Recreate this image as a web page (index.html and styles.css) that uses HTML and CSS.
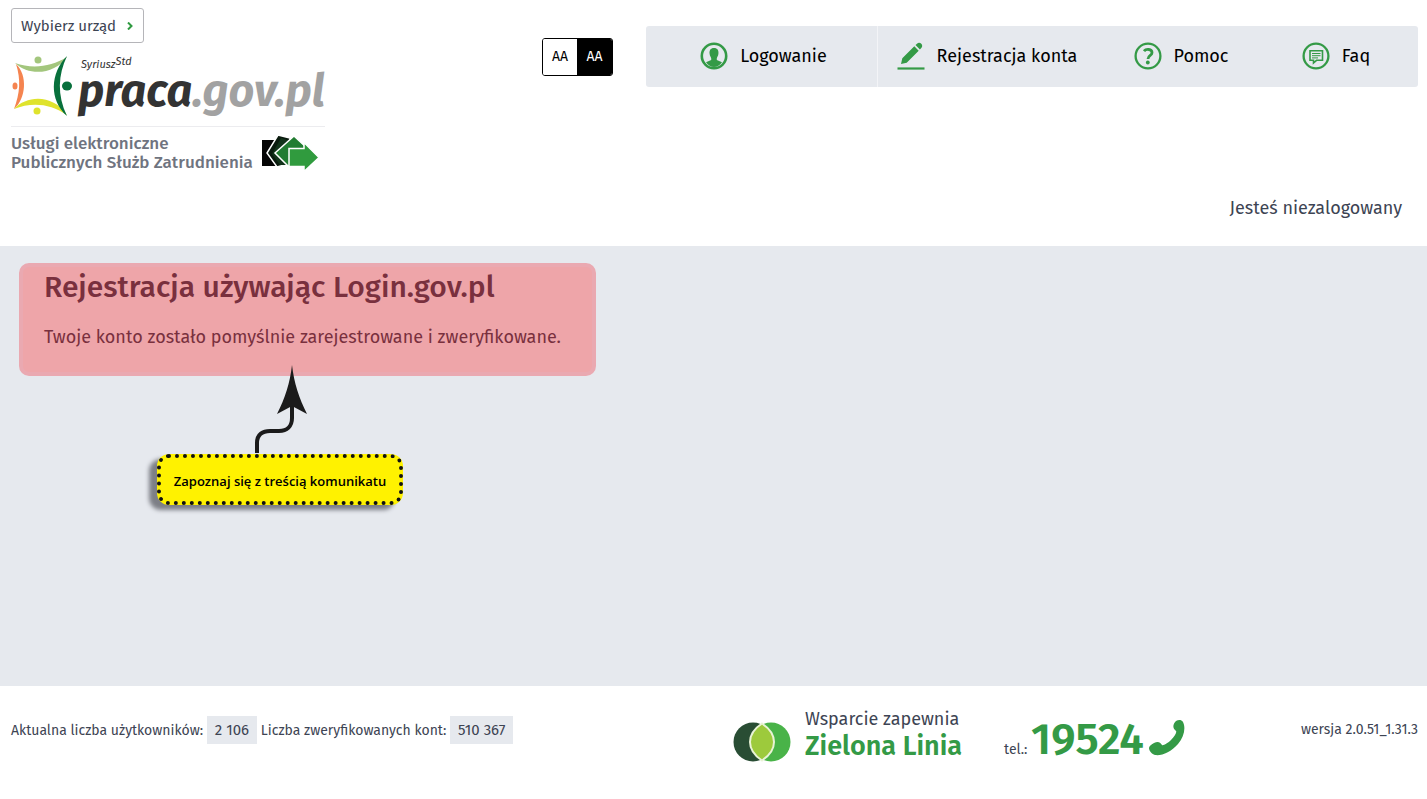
FILE: index.html
```html
<!DOCTYPE html>
<html lang="pl">
<head>
    <meta charset="utf-8">
    <meta name="viewport" content="width=device-width, initial-scale=1">
    <title>praca.gov.pl</title>
    <link rel="stylesheet" href="styles.css">
</head>
<body>
    <header class="header">
        <div class="brand">
            <button type="button" class="office-btn">Wybierz urząd
                <svg width="6" height="8" viewBox="0 0 6 8"><path d="M1 0.5L4.5 4L1 7.5" fill="none" stroke="#2f9a41" stroke-width="2"/></svg>
            </button>
            <a href="#" class="logo">
                <svg class="logo-mark" width="64" height="64" viewBox="0 0 64 64">
                    <path d="M4 8C21 14 40 12 56 2C44 19 19 22 4 8Z" fill="#a3c67d"/>
                    <path d="M5 9C17 20 15 44 3 54C9 38 10 25 5 9Z" fill="#f58450"/>
                    <path d="M3 54C16 40 42 39 56 60C39 48 20 47 3 54Z" fill="#dfe32d"/>
                    <path d="M56 1C47 20 46 40 56 61C38 45 39 18 56 1Z" fill="#08703c"/>
                    <circle cx="27" cy="5" r="3.5" fill="#a3c67d"/>
                    <ellipse cx="4" cy="31" rx="2.5" ry="3.5" fill="#f58450"/>
                    <circle cx="26" cy="56" r="3.5" fill="#dfe32d"/>
                    <ellipse cx="56" cy="31" rx="5" ry="4.5" fill="#08703c"/>
                </svg>
                <span class="logo-text">
                    <span class="logo-small">Syriusz<sup>Std</sup></span>
                    <span class="logo-name">praca<span>.gov.pl</span></span>
                </span>
            </a>
            <div class="tagline">
                <p>Usługi elektroniczne<br>Publicznych Służb Zatrudnienia</p>
                <svg width="57" height="38" viewBox="0 0 57 38">
                    <path d="M0 6H14V32H0Z" fill="#050505"/>
                    <path d="M16 1L28 4L26 30L15 33L5 19Z" fill="#0a1a0e" stroke="#fff" stroke-width="1.5"/>
                    <path d="M19 4L28 7L26 31L18 31L10 20Z" fill="#12331a"/>
                    <path d="M32 2L45 14V32H26L13 19Z" fill="#217c31" stroke="#fff" stroke-width="1.5"/>
                    <path d="M27 14.5H42V8.5L57 23.5L42 37.5V32.5H27Z" fill="#309b3e" stroke="#fff" stroke-width="1.5"/>
                </svg>
            </div>
        </div>
        <div class="tools">
            <div class="top-row">
                <div class="contrast">
                    <button type="button">AA</button>
                    <button type="button" class="dark">AA</button>
                </div>
                <nav class="menu">
                    <a href="#">
                        <svg width="28" height="28" viewBox="0 0 28 28">
                            <circle cx="14" cy="14" r="12.2" fill="none" stroke="#349a46" stroke-width="2.6"/>
                            <path d="M14 6C17.5 6 18.8 8.3 18.4 11.8C18.2 14 17.2 15 16.8 16.3V18L22 20.3C20 23.5 17 25 14 25S8 23.5 6 20.3L11.2 18V16.3C10.8 15 9.8 14 9.6 11.8C9.2 8.3 10.5 6 14 6Z" fill="#349a46"/>
                        </svg>
                        Logowanie
                    </a>
                    <a href="#" class="register">
                        <svg width="28" height="28" viewBox="0 0 28 28">
                            <path d="M4 22L5.3 16.3L17.3 4.3L21.7 8.7L9.7 20.7ZM18.5 3.1L20 1.7C21.2 0.5 23 0.5 24.3 1.7C25.5 3 25.5 4.8 24.3 6L22.9 7.5Z" fill="#349a46"/>
                            <path d="M0.5 26.5H27.5" stroke="#349a46" stroke-width="2.2"/>
                        </svg>
                        Rejestracja konta
                    </a>
                    <a href="#">
                        <svg width="28" height="28" viewBox="0 0 28 28">
                            <circle cx="14" cy="14" r="12.4" fill="none" stroke="#349a46" stroke-width="2.3"/>
                            <path d="M10 9.2C12 6.7 18 6.7 18 10.7C18 13.5 14 13.2 14 17" fill="none" stroke="#349a46" stroke-width="2.8"/>
                            <circle cx="13.8" cy="20.5" r="1.9" fill="#349a46"/>
                        </svg>
                        Pomoc
                    </a>
                    <a href="#">
                        <svg width="28" height="28" viewBox="0 0 28 28">
                            <circle cx="14" cy="14" r="12.4" fill="none" stroke="#349a46" stroke-width="2.3"/>
                            <path d="M8 8.8H20.5V18.3H14.5L11.5 21V18.3H8Z" fill="none" stroke="#349a46" stroke-width="1.6"/>
                            <path d="M10 11.5H18.5M10 13.7H18.5M10 15.9H16" stroke="#349a46"/>
                        </svg>
                        Faq
                    </a>
                </nav>
            </div>
            <p class="login-status">Jesteś niezalogowany</p>
        </div>
    </header>

    <main class="content">
        <section class="message">
            <h1>Rejestracja używając Login.gov.pl</h1>
            <p>Twoje konto zostało pomyślnie zarejestrowane i zweryfikowane.</p>
        </section>
        <div class="callout">
            <svg class="callout-arrow" width="54" height="90" viewBox="0 0 54 90">
                <path d="M4 88V78C4 69 10 66 17 66H26C34 66 39 61 39 53V36" fill="none" stroke="#1b1b1b" stroke-width="4"/>
                <path d="M39 0C41 18 46 33 54 49L39 41L24 49C32 33 37 18 39 0Z" fill="#1b1b1b"/>
            </svg>
            Zapoznaj się z treścią komunikatu
        </div>
    </main>

    <footer class="footer">
        <p class="stats">
            Aktualna liczba użytkowników: <span>2 106</span>
            Liczba zweryfikowanych kont: <span>510 367</span>
        </p>
        <div class="support">
            <svg class="support-mark" width="58" height="40" viewBox="0 0 58 40">
                <circle cx="20" cy="20" r="19.5" fill="#294d34"/>
                <circle cx="38" cy="20" r="19.5" fill="#49b348"/>
                <path d="M29 1.5C45 12 45 28 29 38.5C13 28 13 12 29 1.5Z" fill="#9dca3c" stroke="#e9f3d5" stroke-width="2"/>
            </svg>
            <p class="support-name">Wsparcie zapewnia<strong>Zielona Linia</strong></p>
            <p class="phone">tel.: <strong>19524</strong></p>
            <svg class="handset" width="36" height="36" viewBox="0 0 36 36">
                <path d="M27 1C29 0 32 -1 34 2C37 8 35 17 29 24C22 32 13 36 6 35C3 34 0 31 0 28C0 26 2 25 5 23C9 21 11 22 13 25C14 26 19 23 22 20C26 16 28 12 27 11C23 8 24 4 27 1Z" fill="#349a46"/>
            </svg>
        </div>
        <p class="version">wersja 2.0.51_1.31.3</p>
    </footer>
</body>
</html>
```
FILE: styles.css
```css
* {
    box-sizing: border-box;
    margin: 0;
    padding: 0;
}
body {
    display: flex;
    flex-direction: column;
    min-height: 100vh;
    background: #fff;
    color: #3d4453;
    font-family: "Fira Sans", "Noto Sans", sans-serif;
    font-size: 18px;
}
a {
    color: inherit;
    text-decoration: none;
}
button {
    font: inherit;
    cursor: pointer;
}
svg {
    display: block;
    flex: none;
}

/* header */
.header {
    display: flex;
    justify-content: space-between;
    padding: 8px 9px 25px 11px;
}
.office-btn {
    display: flex;
    align-items: center;
    justify-content: space-between;
    width: 133px;
    height: 35px;
    padding: 0 10px 0 9px;
    border: 1px solid #b5b5b9;
    border-radius: 3px;
    background: #fff;
    color: #3d4453;
    font-size: 15px;
}
.logo {
    display: flex;
    height: 84px;
    padding-top: 12px;
    border-bottom: 1px solid #ececef;
}
.logo-text {
    display: flex;
    flex-direction: column;
    padding-left: 3px;
    font-style: italic;
}
.logo-small {
    padding-left: 3px;
    color: #333;
    font-size: 11px;
    line-height: 20px;
}
.logo-small sup {
    font-size: 11px;
    line-height: 0;
    vertical-align: 3px;
}
.logo-name {
    color: #333;
    font-size: 45px;
    font-weight: bold;
    line-height: 32px;
}
.logo-name span {
    color: #a2a2a2;
}
.tagline {
    display: flex;
    align-items: center;
    gap: 9px;
    padding-top: 7px;
    color: #6f7480;
    font-size: 17px;
    font-weight: 500;
    line-height: 19px;
}
.tools {
    padding-top: 18px;
}
.top-row {
    display: flex;
    align-items: center;
    gap: 33px;
}
.contrast {
    display: flex;
    border: 1px solid #000;
    border-radius: 3px;
    overflow: hidden;
}
.contrast button {
    width: 34px;
    height: 36px;
    border: 0;
    background: #fff;
    color: #000;
    font-size: 14px;
}
.contrast .dark {
    width: 35px;
    background: #000;
    color: #fff;
}
.menu {
    display: grid;
    grid-template-columns: 232px 230px 146px 164px;
    height: 61px;
    border-radius: 3px;
    background: #e6e9ee;
    color: #000;
}
.menu a {
    display: flex;
    align-items: center;
    justify-content: center;
    gap: 12px;
    padding-bottom: 2px;
}
.menu a:first-child {
    padding-left: 4px;
    border-right: 1px solid #f3f4f7;
}
.menu .register {
    padding-right: 12px;
}
.login-status {
    padding: 108px 16px 0 0;
    line-height: 26px;
    text-align: right;
}

/* message */
.content {
    flex: 1;
    padding: 17px 19px;
    background: #e6e9ee;
}
.message {
    max-width: 577px;
    min-height: 113px;
    padding: 2px 0 0 21px;
    border: 4px solid #eaa9b1;
    border-radius: 10px;
    background: #eea5a9;
    color: #79303e;
}
.message h1 {
    font-size: 30px;
    font-weight: 500;
    line-height: 36px;
}
.message p {
    padding-top: 19px;
    line-height: 26px;
}
.callout {
    position: relative;
    width: 246px;
    margin: 78px 0 0 138px;
    padding-top: 3px;
    border: 4px dotted #111;
    border-radius: 12px;
    background: #fff200;
    box-shadow: -8px 5px 4px #7d7f86;
    color: #000;
    font-family: "Open Sans", sans-serif;
    font-size: 13px;
    font-weight: 600;
    line-height: 40px;
    text-align: center;
}
.callout-arrow {
    position: absolute;
    bottom: 46px;
    left: 92px;
}

/* footer */
.footer {
    display: grid;
    grid-template-columns: 722fr 453fr 232fr;
    padding: 22px 9px 17px 11px;
    font-size: 14px;
    line-height: 28px;
}
.stats,
.version {
    padding-top: 8px;
}
.stats span {
    display: inline-block;
    padding: 0 8px;
    background: #e6e9ee;
    font-size: 15px;
}
.support {
    display: flex;
    align-items: flex-start;
}
.support-mark {
    margin-top: 14px;
}
.support-name {
    padding-left: 14px;
    font-size: 18px;
    line-height: 22px;
}
.support-name strong {
    display: block;
    color: #349a46;
    font-size: 27px;
    font-weight: 600;
    line-height: 32px;
}
.phone {
    padding-left: 42px;
    line-height: 64px;
    white-space: nowrap;
}
.phone strong {
    color: #349a46;
    font-size: 44px;
    font-weight: 600;
}
.handset {
    margin: 12px 0 0 5px;
}
.version {
    text-align: right;
}
```
